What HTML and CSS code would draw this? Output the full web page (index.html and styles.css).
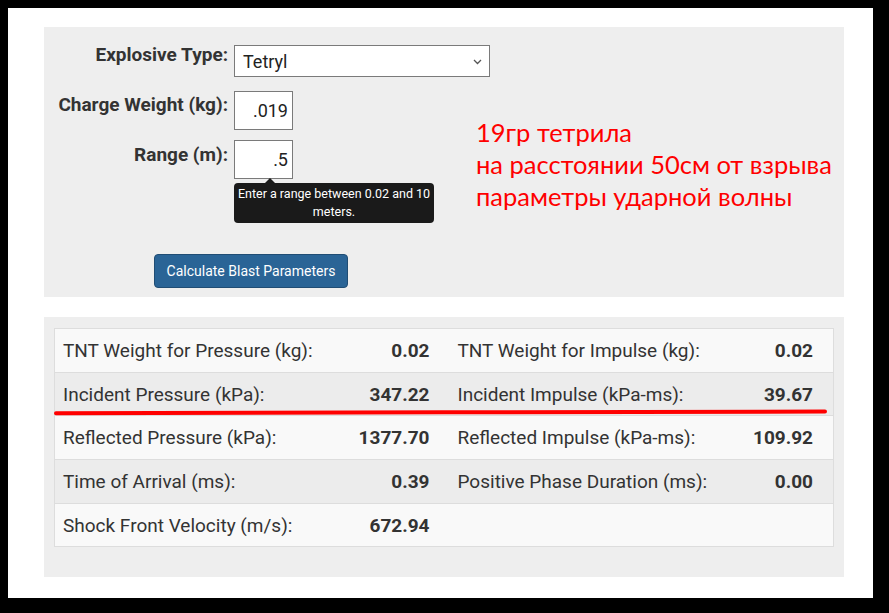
FILE: index.html
```html
<!DOCTYPE html>
<html lang="en">
<head>
<meta charset="utf-8">
<title>Blast Parameters</title>
<link rel="stylesheet" href="styles.css">
</head>
<body>
<div class="frame">
  <section class="panel form-panel">
    <div class="form">
      <div class="row row-type">
        <label class="label">Explosive Type:</label>
        <div class="select">
          <span>Tetryl</span>
          <svg class="chev" width="9" height="6" viewBox="0 0 9 6"><path d="M1 1 L4.5 4.5 L8 1" fill="none" stroke="#555" stroke-width="1.3"/></svg>
        </div>
      </div>
      <div class="row row-weight">
        <label class="label">Charge Weight (kg):</label>
        <div class="input">.019</div>
      </div>
      <div class="row row-range">
        <label class="label">Range (m):</label>
        <div class="field">
          <div class="input">.5</div>
          <div class="tooltip">Enter a range between 0.02 and 10<br>meters.</div>
        </div>
      </div>
      <button class="btn">Calculate Blast Parameters</button>
    </div>
    <div class="note">19гр тетрила<br>на расстоянии 50см от взрыва<br>параметры ударной волны</div>
  </section>
  <section class="panel results-panel">
    <table class="results">
      <colgroup><col class="c1"><col class="c2"><col class="c3"><col class="c4"></colgroup>
      <tr class="r1"><td class="k">TNT Weight for Pressure (kg):</td><td class="v">0.02</td><td class="k">TNT Weight for Impulse (kg):</td><td class="v">0.02</td></tr>
      <tr class="r2"><td class="k">Incident Pressure (kPa):</td><td class="v">347.22</td><td class="k">Incident Impulse (kPa-ms):</td><td class="v">39.67</td></tr>
      <tr class="r3"><td class="k">Reflected Pressure (kPa):</td><td class="v">1377.70</td><td class="k">Reflected Impulse (kPa-ms):</td><td class="v">109.92</td></tr>
      <tr class="r4"><td class="k">Time of Arrival (ms):</td><td class="v">0.39</td><td class="k">Positive Phase Duration (ms):</td><td class="v">0.00</td></tr>
      <tr class="r5"><td class="k">Shock Front Velocity (m/s):</td><td class="v">672.94</td><td class="k"></td><td class="v"></td></tr>
    </table>
    <svg class="mark" width="800" height="260" viewBox="0 0 800 260"><path d="M12 96.2 L400 95.3 L781 94.6" fill="none" stroke="#ff0000" stroke-width="4" stroke-linecap="round"/></svg>
  </section>
</div>
</body>
</html>
```
FILE: styles.css
```css
html, body {
  margin: 0;
  padding: 0;
  background: #000;
}
body {
  width: 889px;
  height: 613px;
  overflow: hidden;
  font-family: Roboto, "Liberation Sans", sans-serif;
  color: #333;
}
.frame {
  background: #fff;
  margin: 8px 16px 0 8px;
  height: 590px;
  padding: 19px 29px 0 36px;
  box-sizing: border-box;
}
.panel {
  background: #eeeeee;
  width: 800px;
  position: relative;
  box-sizing: border-box;
}
.form-panel {
  height: 270px;
  padding-top: 18px;
}
.form {
  display: flex;
  flex-direction: column;
}
.row {
  display: flex;
  align-items: flex-start;
}
.row-weight { margin-top: 14px; }
.row-range { margin-top: 10px; }
.label {
  width: 184px;
  margin-right: 6px;
  text-align: right;
  font-weight: 700;
  font-size: 19px;
  line-height: 20px;
  color: #333;
  white-space: nowrap;
}
.row-type .label { padding-top: 0; }
.row-weight .label { padding-top: 4px; }
.row-range .label { padding-top: 5px; }
.select {
  width: 256px;
  height: 32px;
  box-sizing: border-box;
  border: 1px solid #7a7a7a;
  background: #fff;
  display: flex;
  align-items: center;
  justify-content: space-between;
  padding: 0 7px 0 8px;
  font-size: 18px;
  color: #222;
}
.chev { margin-top: 1px; }
.field {
  position: relative;
}
.input {
  width: 59px;
  height: 39px;
  box-sizing: border-box;
  border: 1px solid #7a7a7a;
  background: #fff;
  text-align: right;
  padding-right: 4px;
  font-size: 18px;
  line-height: 37px;
  color: #222;
}
.tooltip {
  position: absolute;
  left: 0;
  top: 43px;
  width: 200px;
  height: 40px;
  box-sizing: border-box;
  padding: 2px 2px;
  background: #1a1a1a;
  border-radius: 4px;
  color: #fff;
  font-size: 12.5px;
  line-height: 18px;
  text-align: center;
  z-index: 2;
  white-space: nowrap;
}
.tooltip::before {
  content: "";
  position: absolute;
  left: 31px;
  top: -5px;
  border-left: 5px solid transparent;
  border-right: 5px solid transparent;
  border-bottom: 5px solid #1a1a1a;
}
.btn {
  margin: 75px 0 0 110px;
  width: 194px;
  height: 34px;
  background: #2a6496;
  border: 1px solid #204d74;
  border-radius: 4px;
  color: #fff;
  font-family: Roboto, "Liberation Sans", sans-serif;
  font-size: 14px;
  padding: 0;
  align-self: flex-start;
}
.note {
  position: absolute;
  left: 432px;
  top: 89px;
  color: #ff0000;
  font-family: Lato, "Noto Sans", sans-serif;
  font-size: 25.5px;
  line-height: 32px;
  white-space: nowrap;
}
.results-panel {
  margin-top: 20px;
  height: 260px;
  padding: 11px 11px 0 10px;
}
.results {
  width: 779px;
  table-layout: fixed;
  border-collapse: collapse;
  border: 1px solid #dddddd;
  font-size: 19px;
}
.c1 { width: 275px; }
.c2 { width: 120px; }
.c3 { width: 280px; }
.c4 { width: 104px; }
.results tr { height: 44px; }
.results tr.r2, .results tr.r5 { height: 43px; }
.results td {
  padding: 0 8px;
  border-top: 1px solid #dddddd;
  vertical-align: middle;
  white-space: nowrap;
}
.results td.v {
  text-align: right;
  font-weight: 700;
  padding-right: 20px;
}
.r1 td, .r3 td, .r5 td { background: #f9f9f9; }
.r2 td, .r4 td { background: #ececec; }
.mark {
  position: absolute;
  left: 0;
  top: 0;
  pointer-events: none;
}
```
